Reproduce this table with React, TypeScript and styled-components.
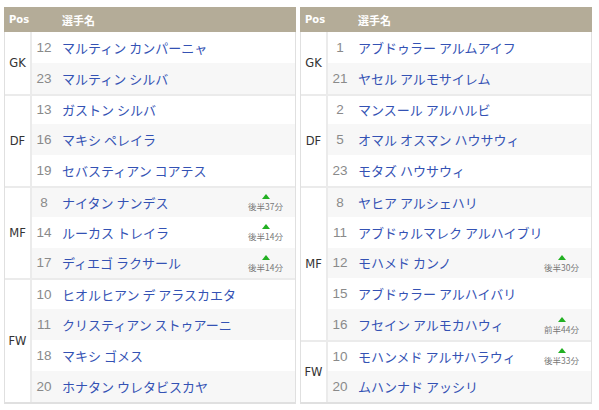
import styled, { createGlobalStyle } from 'styled-components'

type Player = { no: number; name: string; sub?: string }
type Group = { pos: string; players: Player[] }

const leftTeam: Group[] = [
  {
    pos: 'GK',
    players: [
      { no: 12, name: 'マルティン カンパーニャ' },
      { no: 23, name: 'マルティン シルバ' }
    ]
  },
  {
    pos: 'DF',
    players: [
      { no: 13, name: 'ガストン シルバ' },
      { no: 16, name: 'マキシ ペレイラ' },
      { no: 19, name: 'セバスティアン コアテス' }
    ]
  },
  {
    pos: 'MF',
    players: [
      { no: 8, name: 'ナイタン ナンデス', sub: '後半37分' },
      { no: 14, name: 'ルーカス トレイラ', sub: '後半14分' },
      { no: 17, name: 'ディエゴ ラクサール', sub: '後半14分' }
    ]
  },
  {
    pos: 'FW',
    players: [
      { no: 10, name: 'ヒオルヒアン デ アラスカエタ' },
      { no: 11, name: 'クリスティアン ストゥアーニ' },
      { no: 18, name: 'マキシ ゴメス' },
      { no: 20, name: 'ホナタン ウレタビスカヤ' }
    ]
  }
]

const rightTeam: Group[] = [
  {
    pos: 'GK',
    players: [
      { no: 1, name: 'アブドゥラー アルムアイフ' },
      { no: 21, name: 'ヤセル アルモサイレム' }
    ]
  },
  {
    pos: 'DF',
    players: [
      { no: 2, name: 'マンスール アルハルビ' },
      { no: 5, name: 'オマル オスマン ハウサウィ' },
      { no: 23, name: 'モタズ ハウサウィ' }
    ]
  },
  {
    pos: 'MF',
    players: [
      { no: 8, name: 'ヤヒア アルシェハリ' },
      { no: 11, name: 'アブドゥルマレク アルハイブリ' },
      { no: 12, name: 'モハメド カンノ', sub: '後半30分' },
      { no: 15, name: 'アブドゥラー アルハイバリ' },
      { no: 16, name: 'フセイン アルモカハウィ', sub: '前半44分' }
    ]
  },
  {
    pos: 'FW',
    players: [
      { no: 10, name: 'モハンメド アルサハラウィ', sub: '後半33分' },
      { no: 20, name: 'ムハンナド アッシリ' }
    ]
  }
]

const GlobalStyle = createGlobalStyle`
  html, body {
    margin: 0;
    padding: 0;
    background: #fff;
    overflow: hidden;
  }
  body {
    font-family: "Noto Sans", "Noto Sans CJK JP", sans-serif;
  }
`

const Page = styled.div`
  display: flex;
  gap: 4px;
  padding: 7px 0 0 4px;
`

const Table = styled.div`
  width: 292px;
  box-sizing: border-box;
  display: flex;
  flex-direction: column;
  border: 1px solid #e0e0e0;
  border-top: none;
  border-bottom-width: 2px;
`

const Header = styled.div`
  display: flex;
  align-items: center;
  height: 25px;
  margin: 0 -1px;
  padding: 0 1px;
  background: #b4ac98;
  color: #fff;
  font-family: "DejaVu Sans", "Noto Sans CJK JP", sans-serif;
  font-size: 10px;
  font-weight: bold;
`

const HeadPos = styled.div`
  width: 51px;
  padding-left: 4px;
  box-sizing: border-box;
`

const HeadName = styled.div`
  padding-left: 6px;
  font-family: "Noto Sans CJK JP", sans-serif;
  font-size: 11px;
`

const GroupBox = styled.div`
  display: flex;
  & + & {
    border-top: 2px solid #ebebeb;
  }
`

const PosCell = styled.div`
  width: 25px;
  flex-shrink: 0;
  display: flex;
  align-items: center;
  justify-content: center;
  border-right: 2px solid #ebebeb;
  background: #fff;
  color: #333;
  font-family: "DejaVu Sans", sans-serif;
  font-size: 11.5px;
`

const Rows = styled.div`
  flex: 1;
  display: flex;
  flex-direction: column;
`

// the group divider sits inside the first row's height, so the row pitch stays even
const Row = styled.div<{ $alt: boolean; $cut: boolean }>`
  height: ${(p) => (p.$cut ? '28.8px' : '30.8px')};
  display: flex;
  align-items: center;
  background: ${(p) => (p.$alt ? '#f7f7f7' : '#fff')};
`

const Num = styled.div`
  width: 24px;
  text-align: center;
  color: #8a8a8a;
  font-family: "Liberation Sans", sans-serif;
  font-size: 13.5px;
`

const Name = styled.div`
  flex: 1;
  padding-left: 6px;
  color: #3452b4;
  font-family: "Noto Sans CJK JP", sans-serif;
  font-size: 13px;
  white-space: nowrap;
`

const Sub = styled.div`
  display: flex;
  flex-direction: column;
  align-items: center;
  gap: 3px;
  padding-right: 12px;
  margin-top: 1px;
`

const SubText = styled.span`
  color: #777;
  font-family: "Noto Sans CJK JP", sans-serif;
  font-size: 8.5px;
  line-height: 9px;
`

function UpArrow() {
  return (
    <svg width="8" height="5" viewBox="0 0 8 5">
      <polygon points="4,0 8,5 0,5" fill="#22b022" />
    </svg>
  )
}

function Lineup({ groups }: { groups: Group[] }) {
  let idx = 0
  return (
    <Table>
      <Header>
        <HeadPos>Pos</HeadPos>
        <HeadName>選手名</HeadName>
      </Header>
      {groups.map((g, gi) => (
        <GroupBox key={g.pos}>
          <PosCell>{g.pos}</PosCell>
          <Rows>
            {g.players.map((p, pi) => {
              const alt = idx++ % 2 === 1
              return (
                <Row key={p.no} $alt={alt} $cut={gi > 0 && pi === 0}>
                  <Num>{p.no}</Num>
                  <Name>{p.name}</Name>
                  {p.sub && (
                    <Sub>
                      <UpArrow />
                      <SubText>{p.sub}</SubText>
                    </Sub>
                  )}
                </Row>
              )
            })}
          </Rows>
        </GroupBox>
      ))}
    </Table>
  )
}

export default function App() {
  return (
    <>
      <GlobalStyle />
      <Page>
        <Lineup groups={leftTeam} />
        <Lineup groups={rightTeam} />
      </Page>
    </>
  )
}
